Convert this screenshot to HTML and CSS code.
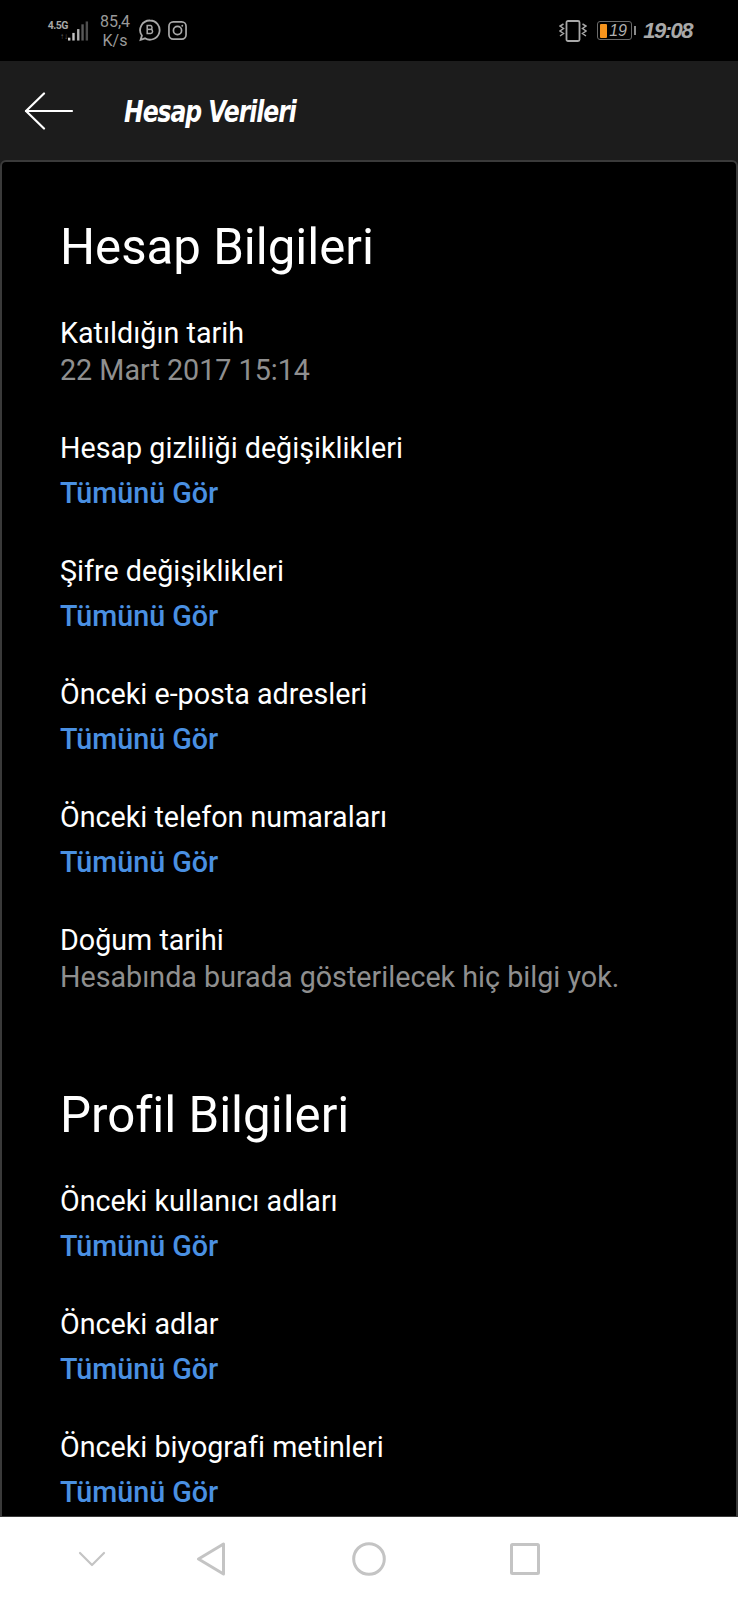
FILE: index.html
```html
<!DOCTYPE html>
<html lang="tr">
<head>
<meta charset="utf-8">
<title>Hesap Verileri</title>
<link rel="stylesheet" href="styles.css">
</head>
<body>
<div class="phone">
  <header class="status">
    <div class="status-left">
      <div class="net">
        <div class="net-labels"><span class="net-type">4.5G</span><span class="net-arrows">↑↓</span></div>
        <svg class="signal" width="22" height="22" viewBox="0 0 22 22"><rect x="0" y="18" width="2.500" height="3" fill="#d0d0d0"/><rect x="4.500" y="13" width="2.500" height="8" fill="#c4c4c4"/><rect x="9.500" y="9" width="2.500" height="12" fill="#b0b0b0"/><rect x="14" y="4" width="2.500" height="17" fill="#5a5a5a"/><rect x="18.500" y="1" width="2.500" height="20" fill="#4d4d4d"/></svg>
      </div>
      <div class="speed"><span>85,4</span><span>K/s</span></div>
      <svg class="app-icon" width="22" height="23" viewBox="0 0 22 23" fill="none" stroke="#a8a8a8" stroke-width="1.8"><path d="M11 1.500a9.600 9.600 0 1 1-5 17.800l-4.400 1.600 1.300-4.300A9.600 9.600 0 0 1 11 1.500z"/><path d="M8.200 6.600v8h3.400a2.200 2.200 0 0 0 .4-4.300 2 2 0 0 0-.5-3.700z" stroke-width="1.500"/><path d="M8.200 10.400h3.400" stroke-width="1.500"/></svg>
      <svg class="app-icon app-icon-next" width="19" height="19" viewBox="0 0 20 20" fill="none" stroke="#a8a8a8" stroke-width="1.800"><rect x="1" y="1" width="18" height="18" rx="4.500"/><circle cx="10" cy="10" r="4.300"/><circle cx="15" cy="5" r="1" fill="#a8a8a8" stroke="none"/></svg>
    </div>
    <div class="status-right">
      <svg width="28" height="22" viewBox="0 0 28 22" fill="none" stroke="#a8a8a8" stroke-width="1.500"><rect x="7.500" y="1" width="13" height="20" rx="1.500" stroke-width="1.800"/><path d="M4.500 4l-3.500 2 3.500 2.500-3.500 2.500 3.500 2.500-3.500 2.500M23.500 4l3.500 2-3.500 2.500 3.500 2.500-3.500 2.500 3.500 2.500"/></svg>
      <div class="battery">
        <div class="battery-level"></div>
        <span class="battery-text">19</span>
      </div>
      <div class="battery-tip"></div>
      <span class="clock">19:08</span>
    </div>
  </header>

  <div class="appbar">
    <svg class="back" width="50" height="38" viewBox="0 0 50 38" fill="none" stroke="#fff" stroke-width="2.200" stroke-linecap="round" stroke-linejoin="round"><path d="M48 19H2"/><path d="M20 1.500L2 19l18 17.500"/></svg>
    <h1 class="title">Hesap Verileri</h1>
  </div>

  <main class="card">
    <section class="group">
      <h2 class="group-title">Hesap Bilgileri</h2>
      <div class="entry entry-plain"><p class="label">Katıldığın tarih</p><p class="value">22 Mart 2017 15:14</p></div>
      <div class="entry"><p class="label">Hesap gizliliği değişiklikleri</p><a class="more">Tümünü Gör</a></div>
      <div class="entry"><p class="label">Şifre değişiklikleri</p><a class="more">Tümünü Gör</a></div>
      <div class="entry"><p class="label">Önceki e-posta adresleri</p><a class="more">Tümünü Gör</a></div>
      <div class="entry"><p class="label">Önceki telefon numaraları</p><a class="more">Tümünü Gör</a></div>
      <div class="entry entry-plain"><p class="label">Doğum tarihi</p><p class="value">Hesabında burada gösterilecek hiç bilgi yok.</p></div>
    </section>
    <section class="group group-next">
      <h2 class="group-title">Profil Bilgileri</h2>
      <div class="entry"><p class="label">Önceki kullanıcı adları</p><a class="more">Tümünü Gör</a></div>
      <div class="entry"><p class="label">Önceki adlar</p><a class="more">Tümünü Gör</a></div>
      <div class="entry"><p class="label">Önceki biyografi metinleri</p><a class="more">Tümünü Gör</a></div>
    </section>
  </main>

  <nav class="navbar">
    <svg class="nav-down" width="28" height="16" viewBox="0 0 28 16" fill="none" stroke="#c4c4c4" stroke-width="2.200" stroke-linecap="round" stroke-linejoin="round"><path d="M2 2l12 12L26 2"/></svg>
    <svg class="nav-back" width="30" height="34" viewBox="0 0 30 34" fill="none" stroke="#c4c4c4" stroke-width="3" stroke-linejoin="round"><path d="M27.500 2v30L2.500 17z"/></svg>
    <svg class="nav-home" width="34" height="34" viewBox="0 0 34 34" fill="none" stroke="#c4c4c4" stroke-width="3"><circle cx="17" cy="17" r="15.300"/></svg>
    <svg class="nav-recent" width="30" height="32" viewBox="0 0 30 32" fill="none" stroke="#c4c4c4" stroke-width="3" stroke-linejoin="round"><rect x="1.500" y="1.500" width="27" height="29" rx="1"/></svg>
  </nav>
</div>
</body>
</html>
```
FILE: styles.css
```css
* { box-sizing: border-box; }

html, body {
  margin: 0;
  padding: 0;
  background: #000;
}

.phone {
  width: 738px;
  height: 1600px;
  display: flex;
  flex-direction: column;
  overflow: hidden;
  font-family: Roboto, "Noto Sans", sans-serif;
  color: #fff;
  background: #1c1c1c;
}

/* Status bar */
.status {
  flex: 0 0 61px;
  background: #000;
  display: flex;
  justify-content: space-between;
  align-items: center;
  padding: 0 46px 0 49px;
  color: #a8a8a8;
}

.status-left, .status-right, .net {
  display: flex;
  align-items: center;
}

.net {
  gap: 0;
  width: 40px;
}

.net-labels {
  display: flex;
  flex-direction: column;
  align-items: flex-end;
  width: 19px;
  line-height: 11px;
}

.net-type {
  font-size: 10.5px;
  font-weight: 700;
  letter-spacing: -0.5px;
  color: #a8a8a8;
}

.net-arrows {
  font-size: 8px;
  color: #666;
}

.speed {
  display: flex;
  flex-direction: column;
  align-items: center;
  margin-left: 10px;
  font-size: 16px;
  line-height: 19px;
  width: 32px;
  color: #9a9a9a;
}

.app-icon { margin-left: 8px; }
.app-icon-next { margin-left: 7px; }

.battery {
  width: 35px;
  height: 19px;
  margin-left: 10px;
  border: 1px solid #6a6a6a;
  border-radius: 3px;
  display: flex;
  align-items: center;
  padding-left: 2px;
}

.battery-level {
  width: 7px;
  height: 14px;
  background: #f7941d;
  border-radius: 1px;
}

.battery-text {
  margin-left: 2px;
  font: italic 400 16px "Liberation Sans", sans-serif;
  color: #b0b0b0;
}

.battery-tip {
  width: 2px;
  height: 9px;
  margin-left: 2px;
  background: #8a8a8a;
}

.clock {
  margin-left: 7px;
  font: italic 700 22px "Liberation Sans", sans-serif;
  letter-spacing: -1.5px;
  color: #a8a8a8;
}

/* Title bar */
.appbar {
  flex: 0 0 99px;
  display: flex;
  align-items: center;
  padding: 0 0 0 24px;
  background: #1c1c1c;
}

.back { flex: none; }

.title {
  margin: 0 0 0 50px;
  font-family: "DejaVu Sans", sans-serif;
  font-size: 31px;
  font-style: italic;
  font-weight: 700;
  letter-spacing: -1.4px;
  color: #fff;
  transform: scaleX(0.76);
  transform-origin: left center;
}

/* Scrolling card */
.card {
  flex: 1 1 auto;
  min-height: 0;
  overflow: hidden;
  padding: 57px 58px 0;
  background: #000;
  border: 2px solid #3a3a3a;
  border-bottom-width: 1px;
  border-radius: 6px 6px 0 0;
}

.group-title {
  margin: 0 0 40px;
  font-size: 49.2px;
  font-weight: 400;
  line-height: 56px;
}

.group-next { margin-top: 50px; }

.entry { height: 123px; }
.entry-plain { height: 115px; }

.label, .value, .more {
  display: block;
  margin: 0;
  font-size: 28.7px;
  line-height: 37px;
}

.value { color: #8f8f8f; }

.more {
  margin-top: 8px;
  font-weight: 500;
  color: #4a90e2;
}

/* Navigation bar */
.navbar {
  flex: 0 0 83px;
  display: flex;
  align-items: center;
  background: #fff;
  padding-left: 78px;
}

.nav-down { margin-right: 90px; }
.nav-back { margin-right: 126px; }
.nav-home { margin-right: 124px; }
```
